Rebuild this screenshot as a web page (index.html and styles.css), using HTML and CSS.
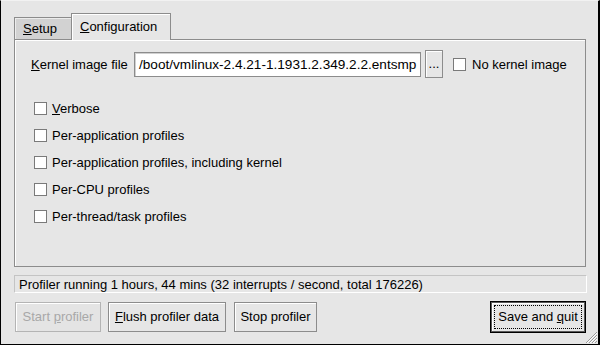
FILE: index.html
```html
<!DOCTYPE html>
<html>
<head>
<meta charset="utf-8">
<link rel="stylesheet" href="styles.css">
</head>
<body>
<div class="window">
  <div class="tabs">
    <div class="tab inactive"><span><u>S</u>etup</span></div>
    <div class="tab active"><span><u>C</u>onfiguration</span></div>
  </div>
  <div class="panel">
    <div class="kernel-row">
      <span class="label"><u>K</u>ernel image file</span>
      <div class="entry">/boot/vmlinux-2.4.21-1.1931.2.349.2.2.entsmp</div>
      <div class="btn dots"><span>...</span></div>
      <span class="check"></span>
      <span class="check-label">No kernel image</span>
    </div>
    <div class="options">
      <div class="opt"><span class="check"></span><span><u>V</u>erbose</span></div>
      <div class="opt"><span class="check"></span><span>Per-application profiles</span></div>
      <div class="opt"><span class="check"></span><span>Per-application profiles, including kernel</span></div>
      <div class="opt"><span class="check"></span><span>Per-CPU profiles</span></div>
      <div class="opt"><span class="check"></span><span>Per-thread/task profiles</span></div>
    </div>
  </div>
  <div class="status">Profiler running 1 hours, 44 mins (32 interrupts / second, total 176226)</div>
  <div class="buttons">
    <div class="btn disabled w-start"><span>Start <u>p</u>rofiler</span></div>
    <div class="btn w-flush"><span><u>F</u>lush profiler data</span></div>
    <div class="btn w-stop"><span>Stop profiler</span></div>
    <div class="spacer"></div>
    <div class="default-wrap"><div class="btn w-save"><span class="focus"><span>Save and <u>q</u>uit</span></span></div></div>
  </div>
  <svg class="grip" width="13" height="13" viewBox="0 0 13 13">
    <g stroke="#9a9a9a" stroke-width="1">
      <line x1="12" y1="1" x2="1" y2="12"/>
      <line x1="12" y1="4" x2="4" y2="12"/>
      <line x1="12" y1="7" x2="7" y2="12"/>
      <line x1="12" y1="10" x2="10" y2="12"/>
    </g>
    <g stroke="#ffffff" stroke-width="1">
      <line x1="12" y1="2" x2="2" y2="12"/>
      <line x1="12" y1="5" x2="5" y2="12"/>
      <line x1="12" y1="8" x2="8" y2="12"/>
    </g>
  </svg>
</div>
</body>
</html>
```

FILE: styles.css
```css
html, body {
  margin: 0;
  padding: 0;
  background: #e6e6e6;
}
body {
  font-family: "Liberation Sans", Arial, sans-serif;
  font-size: 13px;
  color: #000;
}
.window {
  position: relative;
  box-sizing: border-box;
  width: 600px;
  height: 345px;
  background: #e6e6e6;
  border-left: 1px solid #000;
  border-right: 2px solid #000;
  border-bottom: 1px solid #000;
  border-top: 1px solid #f2f2f2;
  padding: 13px 0 0 13px;
}
.tabs {
  display: flex;
  align-items: flex-end;
  height: 25px;
  position: relative;
  z-index: 2;
}
.tab {
  box-sizing: border-box;
  display: flex;
  align-items: center;
  border: 1px solid #8c8c8c;
  border-bottom: none;
}
.tab.inactive {
  width: 57px;
  height: 22px;
  padding-left: 8px;
  padding-bottom: 1px;
  background: #d2d2d2;
  border-right: none;
  box-shadow: inset 1px 1px 0 #ececec;
}
.tab.active {
  width: 100px;
  height: 27px;
  margin-bottom: -1px;
  padding-left: 8px;
  padding-bottom: 2px;
  background: #e6e6e6;
  box-shadow: inset 1px 1px 0 #ffffff;
}
.panel {
  box-sizing: border-box;
  width: 572px;
  height: 228px;
  border: 1px solid #8c8c8c;
  box-shadow: inset 1px 1px 0 #ffffff;
  padding: 10px 0 0 16px;
}
.kernel-row {
  display: flex;
  align-items: center;
  height: 28px;
}
.label {
  width: 103px;
}
.entry {
  box-sizing: border-box;
  width: 287px;
  height: 25px;
  background: #fff;
  border: 1px solid #8c8c8c;
  box-shadow: inset 1px 1px 0 #d0d0d0;
  padding: 4px 0 0 4px;
  white-space: nowrap;
  overflow: hidden;
  font-size: 13.6px;
}
.btn {
  box-sizing: border-box;
  display: flex;
  align-items: center;
  justify-content: center;
  background: #e6e6e6;
  border: 1px solid #8c8c8c;
  box-shadow: inset 1px 1px 0 #ffffff;
  white-space: nowrap;
}
.dots {
  width: 18px;
  height: 28px;
  margin-left: 4px;
  padding-bottom: 2px;
}
.check {
  box-sizing: border-box;
  display: inline-block;
  width: 13px;
  height: 13px;
  background: #fff;
  border: 1px solid #7a7a7a;
  flex: none;
}
.kernel-row .check {
  margin-left: 10px;
}
.check-label {
  margin-left: 6px;
}
.options {
  margin-top: 23px;
  padding-left: 3px;
  display: flex;
  flex-direction: column;
  gap: 13px;
}
.opt {
  display: flex;
  align-items: center;
  gap: 5px;
  height: 14px;
}
.status {
  box-sizing: border-box;
  width: 573px;
  height: 18px;
  margin-top: 8px;
  border-top: 1px solid #c4c4c4;
  border-left: 1px solid #c4c4c4;
  border-right: 1px solid #ffffff;
  border-bottom: 1px solid #ffffff;
  padding: 1px 0 0 4px;
  line-height: 15px;
  white-space: nowrap;
}
.buttons {
  display: flex;
  align-items: center;
  margin-top: 7px;
  width: 573px;
  height: 33px;
}
.buttons .btn {
  height: 30px;
}
.w-start {
  width: 86px;
  margin-left: 1px;
  color: #a8a8a8;
  background: #e4e4e4;
  border-color: #b4b4b4;
}
.w-flush {
  width: 118px;
  margin-left: 7px;
}
.w-stop {
  width: 83px;
  margin-left: 8px;
}
.spacer {
  flex: 1;
}
.default-wrap {
  border: 1px solid #000;
  margin-right: 1px;
}
.buttons .w-save {
  width: 94px;
  height: 30px;
  border-color: #5a5a5a;
}
.focus {
  display: flex;
  align-items: center;
  justify-content: center;
  box-sizing: border-box;
  width: 86px;
  height: 22px;
  outline: 1px dotted #000;
}
.grip {
  position: absolute;
  right: 0;
  bottom: 0;
}
u {
  text-decoration: underline;
  text-underline-offset: 1px;
}
```
